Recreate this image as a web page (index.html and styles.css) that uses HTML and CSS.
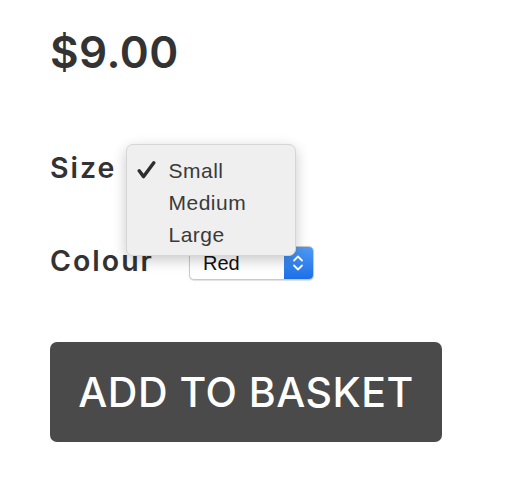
FILE: index.html
```html
<!DOCTYPE html>
<html>
<head>
<meta charset="utf-8">
<link rel="stylesheet" href="styles.css">
</head>
<body>
<div class="product">
  <div class="price">$9.00</div>
  <div class="options">
    <div class="row size-row">
      <span class="label">Size</span>
      <div class="menu-anchor">
        <ul class="menu">
          <li class="item checked">
            <svg class="check" width="19" height="18" viewBox="0 0 19 18">
              <path d="M2.2 9.8 L6.6 15.6 L16.8 1.8" fill="none" stroke="#2e2e2e" stroke-width="3.4" stroke-linecap="round" stroke-linejoin="round"/>
            </svg>Small</li>
          <li class="item">Medium</li>
          <li class="item">Large</li>
        </ul>
      </div>
    </div>
    <div class="row colour-row">
      <span class="label">Colour</span>
      <div class="select">
        <span class="select-value">Red</span>
        <span class="stepper">
          <svg width="12" height="20" viewBox="0 0 12 20">
            <path d="M2 7.5 L6 3.5 L10 7.5" fill="none" stroke="#fff" stroke-width="1.8" stroke-linecap="round" stroke-linejoin="round"/>
            <path d="M2 12.5 L6 16.5 L10 12.5" fill="none" stroke="#fff" stroke-width="1.8" stroke-linecap="round" stroke-linejoin="round"/>
          </svg>
        </span>
      </div>
    </div>
  </div>
  <button class="basket">ADD TO BASKET</button>
</div>
</body>
</html>
```

FILE: styles.css
```css
html, body {
  margin: 0;
  padding: 0;
  background: #fff;
}
body {
  font-family: "Inter", "Lato", sans-serif;
  color: #333;
}
.product {
  padding: 22px 0 0 50px;
  display: flex;
  flex-direction: column;
  align-items: flex-start;
}
.price {
  font-size: 44px;
  line-height: 60px;
  font-weight: 600;
  letter-spacing: 0.5px;
}
.options {
  margin-top: 67px;
  display: flex;
  flex-direction: column;
  gap: 55px;
}
.row {
  display: flex;
  align-items: center;
  height: 38px;
  position: relative;
}
.label {
  font-size: 28.5px;
  font-weight: 600;
  letter-spacing: 2px;
  line-height: 38px;
}
.menu-anchor {
  position: relative;
  width: 0;
  height: 38px;
}
.menu {
  position: absolute;
  left: 10px;
  top: -5px;
  width: 170px;
  height: 112px;
  margin: 0;
  padding: 10px 0 0 0;
  box-sizing: border-box;
  list-style: none;
  background: #efefef;
  border-radius: 7px;
  border: 1px solid #d6d6d6;
  box-shadow: 0 4px 14px rgba(0,0,0,0.22);
  font-family: "Liberation Sans", Arial, sans-serif;
  font-size: 21px;
  letter-spacing: 0.5px;
  color: #3a3a3a;
  z-index: 5;
}
.item {
  position: relative;
  height: 32px;
  line-height: 32px;
  padding-left: 41px;
}
.check {
  position: absolute;
  left: 10px;
  top: 6px;
}
.select {
  margin-left: 35px;
  margin-top: 4px;
  width: 125px;
  height: 34px;
  box-sizing: border-box;
  border: 1px solid #c9c9c9;
  border-radius: 5px;
  background: #fff;
  display: flex;
  align-items: center;
  justify-content: space-between;
  overflow: hidden;
  box-shadow: 0 1px 1px rgba(0,0,0,0.12);
}
.select-value {
  font-family: "Liberation Sans", Arial, sans-serif;
  font-size: 20px;
  color: #111;
  padding-left: 13px;
}
.stepper {
  width: 29px;
  height: 100%;
  background: linear-gradient(#4f9bf7, #1d6fe8);
  display: flex;
  align-items: center;
  justify-content: center;
}
.basket {
  margin-top: 62px;
  width: 392px;
  height: 100px;
  border: none;
  border-radius: 7px;
  background: #4a4a4a;
  color: #fff;
  font-family: "Inter", "Lato", sans-serif;
  font-size: 41px;
  font-weight: 550;
  letter-spacing: 0.5px;
  padding: 0;
  cursor: pointer;
}
```
